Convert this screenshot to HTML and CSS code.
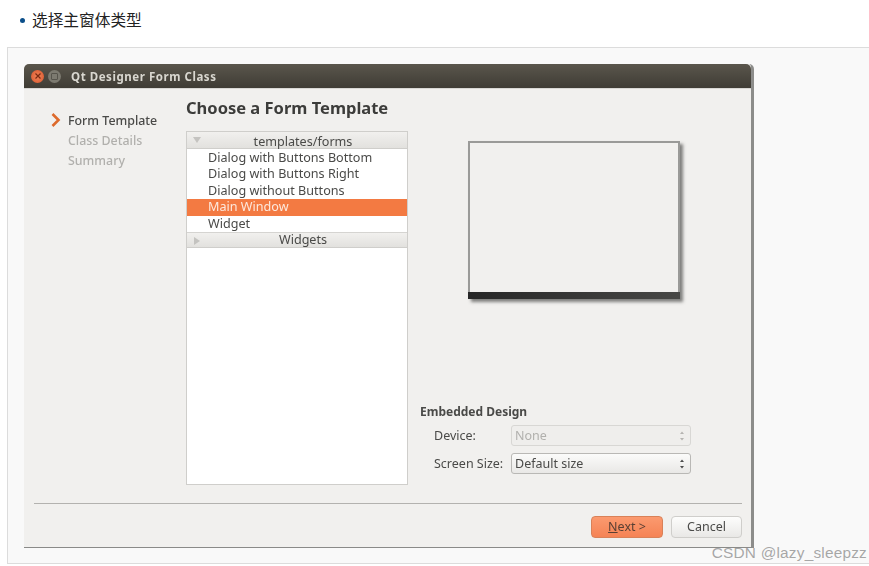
FILE: index.html
```html
<!DOCTYPE html>
<html lang="zh">
<head>
<meta charset="utf-8">
<title>选择主窗体类型</title>
<link rel="stylesheet" href="styles.css">
</head>
<body>
<ul class="steps-list"><li>选择主窗体类型</li></ul>
<figure class="shot">
  <div class="window">
    <header class="titlebar">
      <span class="wbtn wbtn-close"><svg viewBox="0 0 8 8" width="8" height="8"><path d="M1.5 1.5l5 5M6.5 1.5l-5 5" stroke="#7a2a10" stroke-width="1.2"/></svg></span>
      <span class="wbtn wbtn-max"><span class="wbtn-square"></span></span>
      <span class="wtitle">Qt Designer Form Class</span>
    </header>
    <div class="wbody">
      <div class="main">
        <nav class="wizard-nav">
          <div class="nav-item nav-active">
            <svg class="nav-arrow" viewBox="0 0 10 14" width="10" height="14"><path d="M1.5 1l6 6-6 6" fill="none" stroke="#dd6a2c" stroke-width="2.6"/></svg>
            <span>Form Template</span>
          </div>
          <div class="nav-item">Class Details</div>
          <div class="nav-item">Summary</div>
        </nav>
        <section class="content">
          <h1 class="heading">Choose a Form Template</h1>
          <div class="columns">
            <div class="tree">
              <div class="tree-head">
                <svg class="tree-tri" viewBox="0 0 8 8" width="8" height="8"><path d="M0 1h8L4 7z" fill="#c4c3c0"/></svg>
                templates/forms
              </div>
              <div class="tree-item tree-first">Dialog with Buttons Bottom</div>
              <div class="tree-item">Dialog with Buttons Right</div>
              <div class="tree-item">Dialog without Buttons</div>
              <div class="tree-item tree-selected">Main Window</div>
              <div class="tree-item">Widget</div>
              <div class="tree-head tree-head-2">
                <svg class="tree-tri" viewBox="0 0 8 8" width="8" height="8"><path d="M1 0v8l6-4z" fill="#c4c3c0"/></svg>
                Widgets
              </div>
              <div class="tree-rest"></div>
            </div>
            <div class="side">
              <div class="preview-wrap">
                <div class="preview"><div class="preview-bar"></div></div>
              </div>
              <div class="embedded">
                <div class="emb-title">Embedded Design</div>
                <div class="emb-grid">
                  <label class="emb-label">Device:</label>
                  <div class="combo combo-off"><span>None</span><svg class="spin" viewBox="0 0 6 12" width="6" height="12"><path d="M3 1.5l2 2.5H1zM3 10.5L1 8h4z" fill="#b5b4b1"/></svg></div>
                  <label class="emb-label">Screen Size:</label>
                  <div class="combo"><span>Default size</span><svg class="spin" viewBox="0 0 6 12" width="6" height="12"><path d="M3 1.5l2 2.5H1zM3 10.5L1 8h4z" fill="#4c4c4c"/></svg></div>
                </div>
              </div>
            </div>
          </div>
        </section>
      </div>
      <hr class="sep">
      <footer class="buttons">
        <button class="btn btn-next"><u>N</u>ext &gt;</button>
        <button class="btn">Cancel</button>
      </footer>
    </div>
  </div>
  <span class="watermark">CSDN @lazy_sleepzz</span>
</figure>
</body>
</html>
```

FILE: styles.css
```css
* { box-sizing: border-box; }
html, body { margin: 0; padding: 0; }
body {
  width: 869px;
  height: 566px;
  overflow: hidden;
  background: #fff;
  font-family: "Noto Sans CJK SC", "Noto Sans", sans-serif;
}
.steps-list {
  margin: 0;
  padding: 9px 0 0 32px;
  height: 47px;
  font-size: 15.7px;
  line-height: 21px;
  color: #222;
  list-style: none;
  position: relative;
}
.steps-list li::before {
  content: "";
  position: absolute;
  left: 20px;
  top: 18px;
  width: 5px;
  height: 5px;
  border-radius: 50%;
  background: #0b4f8a;
}
.shot {
  position: relative;
  margin: 0 0 0 7px;
  width: 862px;
  height: 517px;
  padding: 16px 0 0 16px;
  background: #f9f9f9;
  border: 1px solid #dcdcdc;
  border-right: 0;
}
.window {
  width: 730px;
  height: 484px;
  display: flex;
  flex-direction: column;
  background: #f1f0ee;
  border-right: 3px solid #8d8d8b;
  border-bottom: 1px solid #8a8a88;
  border-radius: 5px 5px 0 0;
  font-family: "Noto Sans", sans-serif;
  color: #4a4a48;
  font-size: 12.5px;
  filter: blur(0.4px);
}
.titlebar {
  flex: none;
  height: 24px;
  display: flex;
  align-items: center;
  padding-left: 7px;
  background: linear-gradient(#5a564c, #3f3c35);
  border-radius: 5px 5px 0 0;
  box-shadow: 0 1px 0 #d8d7d4;
}
.wbtn {
  width: 13px;
  height: 13px;
  border-radius: 50%;
  display: flex;
  align-items: center;
  justify-content: center;
}
.wbtn-close { background: radial-gradient(#f0845a, #d9552a); }
.wbtn-max { margin-left: 4px; background: #7c7a70; }
.wbtn-square { width: 7px; height: 7px; border: 1px solid #56544c; border-radius: 1px; }
.wtitle {
  margin-left: 10px;
  color: #d9d7d0;
  font-size: 11.5px;
  font-weight: 700;
  letter-spacing: 0.55px;
}
.wbody {
  flex: 1;
  min-height: 0;
  display: flex;
  flex-direction: column;
}
.main {
  flex: none;
  height: 397px;
  display: flex;
}
.wizard-nav {
  flex: none;
  width: 162px;
  padding: 23px 0 0 44px;
  font-size: 12.4px;
}
.nav-item {
  height: 20px;
  line-height: 20px;
  color: #b1b0ad;
  font-weight: 500;
}
.nav-active {
  position: relative;
  color: #4a4a48;
}
.nav-arrow { position: absolute; left: -17px; top: 2px; }
.content { flex: 1; min-width: 0; }
.heading {
  margin: 8px 0 11px;
  height: 24px;
  line-height: 24px;
  font-size: 16.5px;
  font-weight: 700;
  color: #3c3c3a;
}
.columns { display: flex; }
.tree {
  flex: none;
  width: 222px;
  height: 354px;
  display: flex;
  flex-direction: column;
  background: #fff;
  border: 1px solid #cfcecb;
  font-size: 12.6px;
}
.tree-head {
  position: relative;
  flex: none;
  height: 17px;
  line-height: 19px;
  text-align: center;
  padding-left: 12px;
  background: linear-gradient(#f1f0ee, #e2e1de);
  border-bottom: 1px solid #cfcecb;
  color: #4a4a48;
}
.tree-head-2 { height: 16px; line-height: 14px; border-top: 1px solid #d5d4d1; }
.tree-tri { position: absolute; left: 6px; top: 4px; }
.tree-item {
  flex: none;
  height: 16.5px;
  line-height: 16.5px;
  padding-left: 21px;
  color: #4a4a48;
}
.tree-first { margin-top: 0.5px; }
.tree-selected { background: #f37a42; color: #fde8dc; }
.tree-rest { flex: 1; }
.side {
  flex: 1;
  min-width: 0;
  display: flex;
  flex-direction: column;
  padding-left: 12px;
}
.preview-wrap { padding: 10px 0 0 48px; height: 271px; }
.preview {
  position: relative;
  width: 212px;
  height: 158px;
  border: 2px solid #9a9a98;
  border-bottom: 0;
  background: #f1f0ee;
  box-shadow: 3px 3px 3px rgba(80, 80, 78, 0.7);
  display: flex;
  flex-direction: column;
  justify-content: flex-end;
}
.preview-bar {
  height: 7px;
  margin: 0 -2px;
  background: linear-gradient(90deg, #272727, #484846);
}
.emb-title {
  height: 20px;
  line-height: 20px;
  font-weight: 700;
  font-size: 12px;
  color: #4a4a48;
}
.emb-grid {
  display: grid;
  grid-template-columns: 77px 180px;
  grid-auto-rows: 21px;
  row-gap: 7px;
  align-items: center;
  margin-top: 3px;
  padding-left: 14px;
}
.combo {
  height: 21px;
  display: flex;
  align-items: center;
  justify-content: space-between;
  padding: 0 5px 0 3px;
  border: 1px solid #b9b8b5;
  border-radius: 3px;
  background: linear-gradient(#fbfbfa, #e9e8e6);
}
.combo-off {
  color: #b1b0ad;
  background: #efeeec;
  border-color: #d8d7d4;
}
.sep {
  flex: none;
  margin: 18px 9px 0 10px;
  height: 1px;
  border: 0;
  background: #b3b2af;
}
.buttons {
  display: flex;
  justify-content: flex-end;
  gap: 8px;
  padding: 12px 9px 0 0;
}
.btn {
  width: 71px;
  height: 22px;
  padding: 0 0 1px;
  font: inherit;
  color: #4a4a48;
  border: 1px solid #cfcecb;
  border-radius: 4px;
  background: linear-gradient(#fdfdfc, #e9e8e6);
}
.btn-next {
  width: 72px;
  border-color: #d98158;
  background: linear-gradient(#fb9a6f, #f58355);
  color: #5a4034;
}
.watermark {
  position: absolute;
  right: 2px;
  bottom: 2px;
  font-family: "Liberation Sans", sans-serif;
  font-size: 15.4px;
  line-height: 17px;
  color: rgba(110, 110, 110, 0.6);
  letter-spacing: 0.2px;
}
```
